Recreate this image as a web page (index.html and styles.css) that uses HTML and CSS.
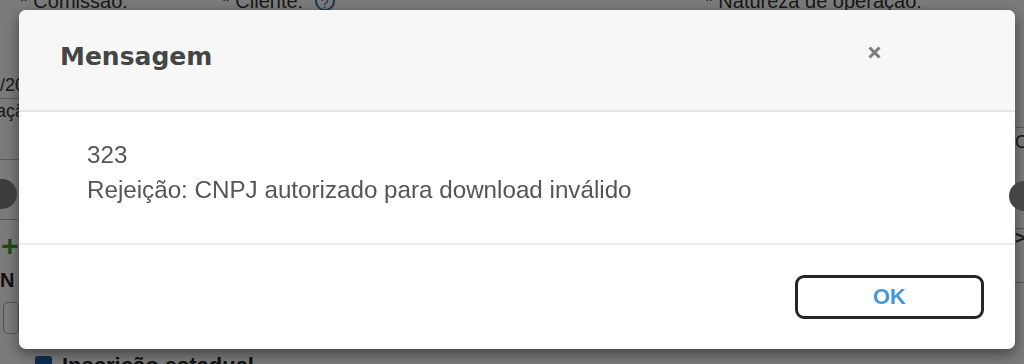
FILE: index.html
```html
<!DOCTYPE html>
<html lang="pt-BR">

<head>
	<meta charset="utf-8">
	<title>Mensagem</title>
	<link rel="stylesheet" href="styles.css">
</head>

<body>
	<!-- formulário ao fundo, escurecido pelo backdrop -->
	<div class="page">
		<div class="labels">
			<span>* Comissão:</span>
			<span>* Cliente: <i class="help">?</i></span>
			<span>* Natureza de operação:</span>
		</div>
		<div class="columns">
			<div class="edge edge-left">
				<div class="cell cell-date"><span>20/03/2023</span></div>
				<div class="cell cell-op"><span>Operação</span></div>
				<div class="cell cell-gap"></div>
				<div class="cell cell-gap2"></div>
				<div class="cell cell-plus"><span class="plus">+</span></div>
				<div class="cell cell-n"><b>N</b></div>
				<div class="cell cell-input"><span class="input"></span></div>
			</div>
			<div class="edge edge-right">
				<div class="cell cell-r1"></div>
				<div class="cell cell-r2"><span>Cfop</span></div>
				<div class="cell cell-r3"></div>
				<div class="cell cell-r4"><span>&gt;</span></div>
				<div class="cell cell-r5"></div>
			</div>
		</div>
		<div class="bottom">
			<span class="check"></span>
			<b>Inscrição estadual</b>
		</div>
	</div>

	<div class="backdrop"></div>

	<div class="modal">
		<div class="modal-header">
			<h4 class="modal-title">Mensagem</h4>
			<button class="close" type="button">
				<svg width="15" height="15" viewBox="0 0 15 15">
					<path d="M2.5 2.5 L12.5 12.5 M12.5 2.5 L2.5 12.5" stroke="#7d7d7d" stroke-width="3" stroke-linecap="butt" />
				</svg>
			</button>
		</div>
		<div class="modal-body">
			<p>323</p>
			<p>Rejeição: CNPJ autorizado para download inválido</p>
		</div>
		<div class="modal-footer">
			<button class="btn-ok" type="button">OK</button>
		</div>
	</div>

	<span class="float-btn float-left"></span>
	<span class="float-btn float-right"></span>
</body>

</html>
```

FILE: styles.css
```css
body {
	margin: 0;
	width: 1024px;
	height: 364px;
	overflow: hidden;
	background: #fff;
	font-family: "Liberation Sans", Arial, sans-serif;
	color: #333;
}

/* pagina de fundo */

.page {
	display: flex;
	flex-direction: column;
	height: 364px;
}

.labels {
	display: grid;
	flex-shrink: 0;
	grid-template-columns: 202px 483px 1fr;
	padding-left: 20px;
	height: 10px;
	overflow: hidden;
	font-size: 20px;
	line-height: 20px;
	color: #333;
}

.labels span {
	margin-top: -9px;
	white-space: nowrap;
}

.help {
	display: inline-block;
	width: 20px;
	height: 20px;
	margin-left: 6px;
	border-radius: 50%;
	border: 2px solid #3a6ea8;
	color: #3a6ea8;
	font-style: normal;
	font-size: 14px;
	text-align: center;
	box-sizing: border-box;
}

.columns {
	display: flex;
	flex-shrink: 0;
	justify-content: space-between;
	height: 339px;
}

.edge {
	display: flex;
	flex-direction: column;
	overflow: hidden;
	font-size: 18px;
	white-space: nowrap;
}

.edge-left {
	width: 19px;
}

.edge-right {
	width: 9px;
}

.cell {
	display: flex;
	align-items: center;
	box-sizing: border-box;
}

.cell-date {
	margin-top: 62px;
	height: 27px;
	border-bottom: 1px solid #bbb;
}

.cell-date span {
	margin-left: -45px;
}

.cell-op {
	height: 24px;
}

.cell-op span {
	margin-left: -44px;
}

.cell-gap {
	height: 37px;
	border-bottom: 1px solid #bbb;
}

.cell-gap2 {
	height: 60px;
	border-bottom: 1px solid #bbb;
}

.cell-plus {
	height: 45px;
	padding-top: 6px;
}

.plus {
	color: #3c9a2c;
	font-size: 30px;
	font-weight: bold;
	margin-left: 1px;
}

.cell-n {
	height: 30px;
	font-size: 20px;
	color: #222;
}

.cell-input {
	height: 40px;
	padding-top: 6px;
}

.input {
	display: block;
	width: 40px;
	height: 30px;
	margin-left: 3px;
	border: 1px solid #aaa;
	border-radius: 5px;
}

.cell-r1 {
	margin-top: 108px;
	height: 10px;
	border-bottom: 1px solid #bbb;
}

.cell-r2 {
	height: 28px;
}

.cell-r3 {
	height: 73px;
	border-bottom: 1px solid #bbb;
}

.cell-r4 {
	height: 18px;
	font-weight: bold;
}

.cell-r5 {
	height: 36px;
	border-bottom: 1px solid #bbb;
}

.bottom {
	display: flex;
	align-items: flex-start;
	gap: 10px;
	padding: 5px 0 0 35px;
	font-size: 22px;
	line-height: 24px;
	color: #222;
}

.check {
	width: 17px;
	height: 17px;
	margin-top: 2px;
	border-radius: 3px;
	background: #1f5fa8;
}

.backdrop {
	position: fixed;
	inset: 0;
	background: rgba(0, 0, 0, 0.52);
}

/* janela de mensagem */

.modal {
	position: fixed;
	left: 19px;
	top: 10px;
	width: 996px;
	height: 339px;
	display: flex;
	flex-direction: column;
	background: #fff;
	border-radius: 7px;
	overflow: hidden;
	box-shadow: 0 5px 14px rgba(0, 0, 0, 0.45);
}

.modal-header {
	display: flex;
	align-items: flex-start;
	height: 102px;
	padding: 32px 0 0 41px;
	box-sizing: border-box;
	background: #f7f7f7;
	border-bottom: 2px solid #e6e6e6;
}

.modal-title {
	margin: 0;
	font-family: "DejaVu Sans", Verdana, sans-serif;
	font-size: 25px;
	line-height: 30px;
	font-weight: bold;
	color: #454545;
}

.close {
	margin: 3px 133px 0 auto;
	padding: 0;
	border: 0;
	background: transparent;
	line-height: 0;
}

.modal-body {
	height: 133px;
	padding: 25px 0 0 68px;
	box-sizing: border-box;
	border-bottom: 2px solid #ebebeb;
	font-size: 24.2px;
	line-height: 35px;
	color: #555;
}

.modal-body p {
	margin: 0;
}

.modal-footer {
	display: flex;
	justify-content: flex-end;
	flex: 1;
	padding: 30px 31px 0 0;
}

.btn-ok {
	width: 189px;
	height: 44px;
	border: 3px solid #262626;
	border-radius: 9px;
	background: #fff;
	font-family: "Liberation Sans", Arial, sans-serif;
	font-size: 22px;
	font-weight: bold;
	color: #4197db;
}

/* botoes flutuantes sobre tudo */

.float-btn {
	position: fixed;
	width: 30px;
	height: 30px;
	border-radius: 50%;
	background: #3c3c3c;
}

.float-left {
	left: -13px;
	top: 179px;
}

.float-right {
	left: 1009px;
	top: 181px;
	background: #444;
}
```
